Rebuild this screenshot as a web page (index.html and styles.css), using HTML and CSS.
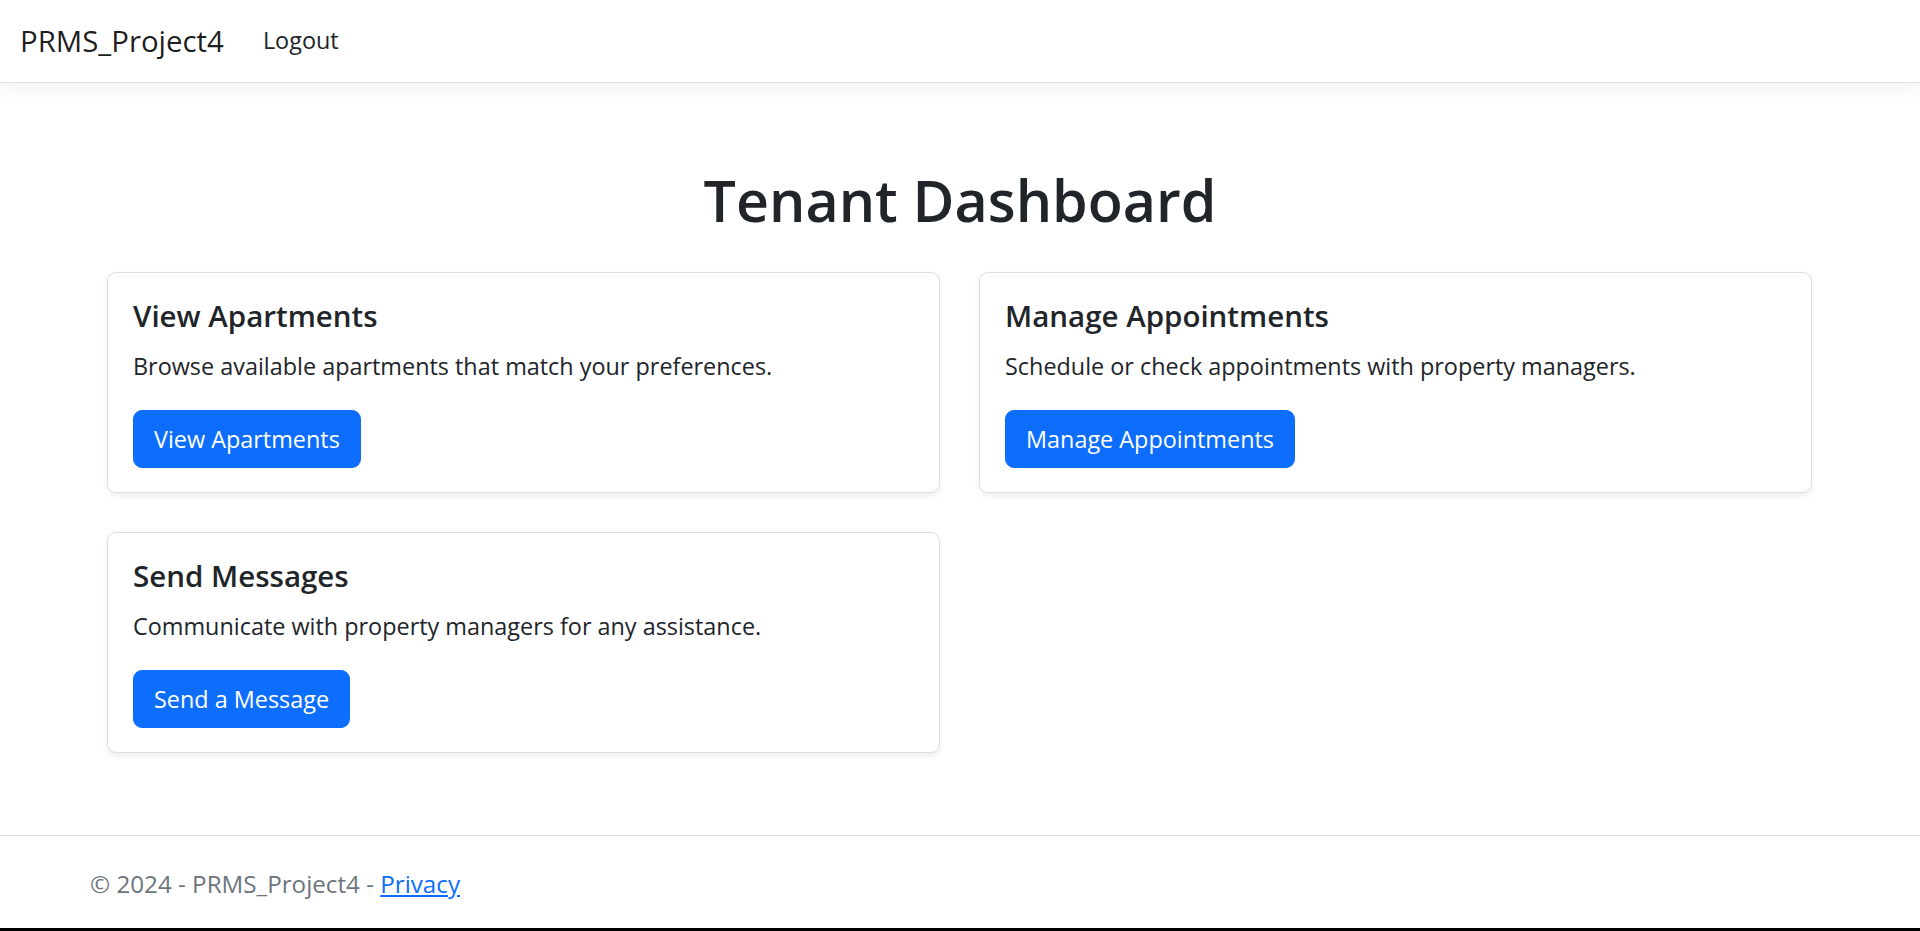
FILE: index.html
```html
<!DOCTYPE html>
<html lang="en">
<head>
<meta charset="utf-8">
<title>Tenant Dashboard - PRMS_Project4</title>
<link rel="stylesheet" href="styles.css">
</head>
<body>
<div class="page">
  <header class="navbar">
    <a class="navbar-brand" href="#">PRMS_Project4</a>
    <a class="nav-link" href="#">Logout</a>
  </header>

  <main class="main">
    <h1 class="page-title">Tenant Dashboard</h1>
    <div class="card-grid">
      <section class="card">
        <h5 class="card-title">View Apartments</h5>
        <p class="card-text">Browse available apartments that match your preferences.</p>
        <a class="btn" href="#">View Apartments</a>
      </section>
      <section class="card">
        <h5 class="card-title">Manage Appointments</h5>
        <p class="card-text">Schedule or check appointments with property managers.</p>
        <a class="btn" href="#">Manage Appointments</a>
      </section>
      <section class="card">
        <h5 class="card-title">Send Messages</h5>
        <p class="card-text">Communicate with property managers for any assistance.</p>
        <a class="btn" href="#">Send a Message</a>
      </section>
    </div>
  </main>

  <footer class="footer">
    <div class="footer-inner">&copy; 2024 - PRMS_Project4 - <a class="footer-link" href="#">Privacy</a></div>
  </footer>
  <div class="screen-edge"></div>
</div>
</body>
</html>
```
FILE: styles.css
```css
* { box-sizing: border-box; }

html, body {
  margin: 0;
  padding: 0;
  background: #fff;
}

body {
  font-family: "Open Sans", "Noto Sans", sans-serif;
  font-size: 23.4px;
  color: #212529;
}

.page {
  display: flex;
  flex-direction: column;
  min-height: 931px;
}

/* Navbar */
.navbar {
  display: flex;
  align-items: flex-start;
  height: 83px;
  padding-left: 20px;
  border-bottom: 1px solid #dee2e6;
  box-shadow: 0 6px 18px rgba(0, 0, 0, 0.05);
  background: #fff;
  position: relative;
  z-index: 1;
}

.navbar-brand {
  font-size: 29.4px;
  line-height: 82px;
  color: rgba(0, 0, 0, 0.9);
  text-decoration: none;
  margin-right: 39px;
}

.nav-link {
  font-size: 23.4px;
  line-height: 80px;
  color: #212529;
  text-decoration: none;
}

/* Main */
.main {
  flex: 1;
  padding-top: 81px;
}

.page-title {
  margin: 0 0 36px;
  text-align: center;
  font-size: 57.3px;
  font-weight: 600;
  line-height: 72px;
  color: #212529;
}

.card-grid {
  display: grid;
  grid-template-columns: 833px 833px;
  column-gap: 39px;
  row-gap: 39px;
  margin-left: 107px;
}

.card {
  height: 221px;
  padding: 25px 25px 24px;
  border: 1px solid #dfdfdf;
  border-radius: 9px;
  background: #fff;
  box-shadow: 0 3px 6px rgba(0, 0, 0, 0.075);
}

.card-title {
  margin: 0 0 15px;
  font-size: 29.5px;
  font-weight: 600;
  line-height: 36px;
  color: #212529;
}

.card-text {
  margin: 0 0 26px;
  font-size: 23.4px;
  line-height: 35px;
}

.btn {
  display: inline-block;
  height: 58px;
  padding: 0 20px;
  border: 1px solid #0d6efd;
  border-radius: 9px;
  background: #0d6efd;
  color: #fff;
  font-size: 23.4px;
  line-height: 56px;
  text-decoration: none;
}

/* Footer */
.footer {
  margin-top: 82px;
  border-top: 1px solid #dee2e6;
  padding-top: 3px;
}

.footer-inner {
  padding-left: 90px;
  font-size: 24.2px;
  line-height: 89px;
  color: #6c757d;
  white-space: nowrap;
}

.footer-link {
  color: #0d6efd;
  text-decoration: underline;
}

.screen-edge {
  height: 3px;
  background: #000;
}
```
